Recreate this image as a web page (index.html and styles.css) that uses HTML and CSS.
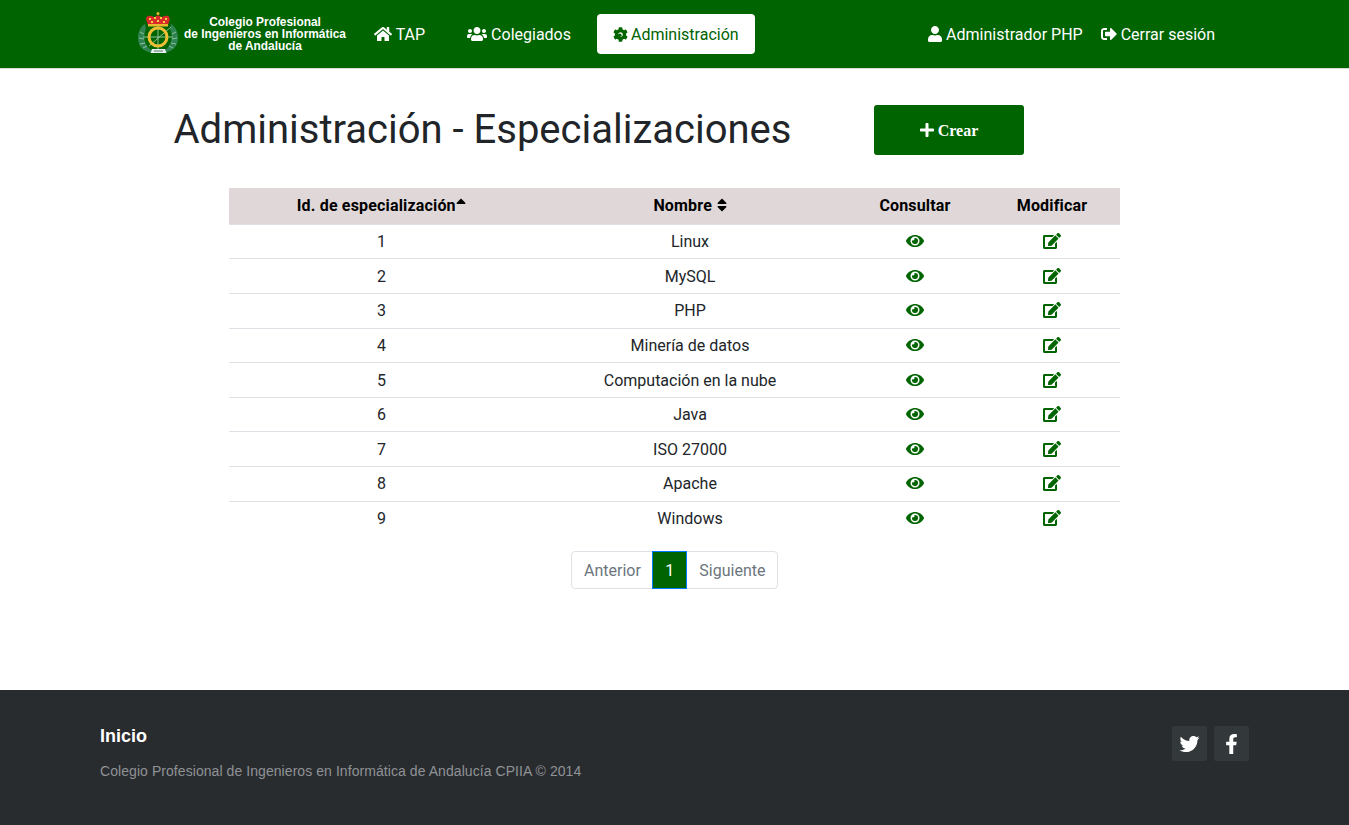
FILE: index.html
```html
<!DOCTYPE html>
<html lang="es">
<head>
<meta charset="utf-8">
<title>Administración - Especializaciones</title>
<link rel="stylesheet" href="styles.css">
</head>
<body>
<svg class="sprite" xmlns="http://www.w3.org/2000/svg">
<symbol id="i-home" viewBox="0 0 576 512"><path d="M280.37 148.26L96 300.11V464a16 16 0 0 0 16 16l112.06-.29a16 16 0 0 0 15.92-16V368a16 16 0 0 1 16-16h64a16 16 0 0 1 16 16v95.64a16 16 0 0 0 16 16.05L464 480a16 16 0 0 0 16-16V300L295.67 148.26a12.19 12.19 0 0 0-15.3 0zM571.6 251.47L488 182.56V44.05a12 12 0 0 0-12-12h-56a12 12 0 0 0-12 12v72.61L318.47 43a48 48 0 0 0-61 0L4.34 251.47a12 12 0 0 0-1.6 16.9l25.5 31A12 12 0 0 0 45.15 301l235.22-193.74a12.19 12.19 0 0 1 15.3 0L530.9 301a12 12 0 0 0 16.9-1.6l25.5-31a12 12 0 0 0-1.7-16.93z"/></symbol>
<symbol id="i-users" viewBox="0 0 640 512"><path d="M96 224c35.3 0 64-28.7 64-64s-28.7-64-64-64-64 28.7-64 64 28.7 64 64 64zm448 0c35.3 0 64-28.7 64-64s-28.7-64-64-64-64 28.7-64 64 28.7 64 64 64zm32 32h-64c-17.6 0-33.5 7.1-45.1 18.6 40.3 22.1 68.9 62 75.1 109.4h66c17.7 0 32-14.3 32-32v-32c0-35.3-28.7-64-64-64zm-256 0c61.9 0 112-50.1 112-112S381.9 32 320 32 208 82.1 208 144s50.1 112 112 112zm76.8 32h-8.3c-20.8 10-43.9 16-68.5 16s-47.6-6-68.5-16h-8.3C179.6 288 128 339.6 128 403.2V432c0 26.5 21.5 48 48 48h288c26.5 0 48-21.5 48-48v-28.8c0-63.6-51.6-115.2-115.2-115.2zm-223.7-13.4C161.5 263.1 145.6 256 128 256H64c-35.3 0-64 28.7-64 64v32c0 17.7 14.3 32 32 32h65.9c6.3-47.4 34.9-87.3 75.2-109.4z"/></symbol>
<symbol id="i-cog" viewBox="0 0 512 512"><path d="M487.4 315.7l-42.6-24.6c4.3-23.2 4.3-47 0-70.2l42.6-24.6c4.9-2.8 7.1-8.6 5.5-14-11.1-35.6-30-67.8-54.7-94.6-3.8-4.1-10-5.1-14.8-2.3L380.8 110c-17.9-15.4-38.5-27.3-60.8-35.1V25.8c0-5.6-3.9-10.5-9.4-11.7-36.7-8.2-74.3-7.8-109.2 0-5.5 1.2-9.4 6.1-9.4 11.7V75c-22.2 7.9-42.8 19.8-60.8 35.1L88.7 85.5c-4.9-2.8-11-1.9-14.8 2.3-24.7 26.7-43.6 58.9-54.7 94.6-1.7 5.4.6 11.2 5.5 14L67.3 221c-4.3 23.2-4.3 47 0 70.2l-42.6 24.6c-4.9 2.8-7.1 8.6-5.5 14 11.1 35.6 30 67.8 54.7 94.6 3.8 4.1 10 5.1 14.8 2.3l42.6-24.6c17.9 15.4 38.5 27.3 60.8 35.1v49.2c0 5.6 3.9 10.5 9.4 11.7 36.7 8.2 74.3 7.8 109.2 0 5.5-1.2 9.4-6.1 9.4-11.7v-49.2c22.2-7.9 42.8-19.8 60.8-35.1l42.6 24.6c4.9 2.8 11 1.9 14.8-2.3 24.7-26.7 43.6-58.9 54.7-94.6 1.5-5.5-.7-11.3-5.6-14.1zM256 336c-44.1 0-80-35.9-80-80s35.9-80 80-80 80 35.9 80 80-35.9 80-80 80z"/><circle cx="232" cy="280" r="62"/></symbol>
<symbol id="i-user" viewBox="0 0 448 512"><path d="M224 256c70.7 0 128-57.3 128-128S294.7 0 224 0 96 57.3 96 128s57.3 128 128 128zm89.6 32h-16.7c-22.2 10.2-46.9 16-72.9 16s-50.6-5.8-72.9-16h-16.7C60.2 288 0 348.2 0 422.4V464c0 26.5 21.5 48 48 48h352c26.5 0 48-21.5 48-48v-41.6c0-74.2-60.2-134.4-134.4-134.4z"/></symbol>
<symbol id="i-out" viewBox="0 0 512 512"><path d="M497 273L329 441c-15 15-41 4.5-41-17v-96H152c-13.3 0-24-10.7-24-24v-96c0-13.3 10.7-24 24-24h136V88c0-21.4 25.9-32 41-17l168 168c9.3 9.4 9.3 24.6 0 34zM192 436v-40c0-6.6-5.4-12-12-12H96c-17.7 0-32-14.3-32-32V160c0-17.7 14.3-32 32-32h84c6.6 0 12-5.4 12-12V76c0-6.6-5.4-12-12-12H96c-53 0-96 43-96 96v192c0 53 43 96 96 96h84c6.6 0 12-5.4 12-12z"/></symbol>
<symbol id="i-plus" viewBox="0 0 448 512"><path d="M416 208H272V64c0-17.67-14.33-32-32-32h-32c-17.67 0-32 14.33-32 32v144H32c-17.67 0-32 14.33-32 32v32c0 17.67 14.33 32 32 32h144v144c0 17.67 14.33 32 32 32h32c17.67 0 32-14.33 32-32V304h144c17.67 0 32-14.33 32-32v-32c0-17.67-14.33-32-32-32z"/></symbol>
<symbol id="i-eye" viewBox="0 0 576 512"><path d="M572.52 241.4C518.29 135.59 410.93 64 288 64S57.68 135.64 3.48 241.41a32.35 32.35 0 0 0 0 29.19C57.71 376.41 165.07 448 288 448s230.32-71.64 284.52-177.41a32.35 32.35 0 0 0 0-29.19zM288 400a144 144 0 1 1 144-144 143.93 143.93 0 0 1-144 144zm0-240a95.31 95.31 0 0 0-25.31 3.79 47.85 47.85 0 0 1-66.9 66.9A95.78 95.78 0 1 0 288 160z"/></symbol>
<symbol id="i-edit" viewBox="0 0 576 512"><path d="M402.6 83.2l90.2 90.2c3.8 3.8 3.8 10 0 13.8L274.4 405.6l-92.8 10.3c-12.4 1.4-22.9-9.1-21.5-21.5l10.3-92.8L388.8 83.2c3.8-3.8 10-3.8 13.8 0zm162-22.9l-48.8-48.8c-15.2-15.2-39.9-15.2-55.2 0l-35.4 35.4c-3.8 3.8-3.8 10 0 13.8l90.2 90.2c3.8 3.8 10 3.8 13.8 0l35.4-35.4c15.2-15.3 15.2-40 0-55.2zM384 346.2V448H64V128h229.8c3.2 0 6.2-1.3 8.5-3.5l40-40c7.6-7.6 2.2-20.5-8.5-20.5H48C21.5 64 0 85.5 0 112v352c0 26.5 21.5 48 48 48h352c26.5 0 48-21.5 48-48V306.2c0-10.7-12.9-16-20.5-8.5l-40 40c-2.2 2.3-3.5 5.3-3.5 8.5z"/></symbol>
<symbol id="i-sort-up" viewBox="0 0 320 512"><path d="M279 224H41c-21.4 0-32.1-25.9-17-41L143 64c9.4-9.4 24.6-9.4 33.9 0l119 119c15.2 15.1 4.5 41-16.9 41z"/></symbol>
<symbol id="i-sort" viewBox="0 0 320 512"><path d="M41 288h238c21.4 0 32.1 25.9 17 41L177 448c-9.4 9.4-24.6 9.4-33.9 0L24 329c-15.1-15.1-4.4-41 17-41zm255-105L177 64c-9.4-9.4-24.6-9.4-33.9 0L24 183c-15.1 15.1-4.4 41 17 41h238c21.4 0 32.1-25.9 17-41z"/></symbol>
<symbol id="i-tw" viewBox="0 0 512 512"><path d="M459.37 151.716c.325 4.548.325 9.097.325 13.645 0 138.72-105.583 298.558-298.558 298.558-59.452 0-114.68-17.219-161.137-47.106 8.447.974 16.568 1.299 25.34 1.299 49.055 0 94.213-16.568 130.274-44.832-46.132-.975-84.792-31.188-98.112-72.772 6.498.974 12.995 1.624 19.818 1.624 9.421 0 18.843-1.3 27.614-3.573-48.081-9.747-84.143-51.98-84.143-102.985v-1.299c13.969 7.797 30.214 12.67 47.431 13.319-28.264-18.843-46.781-51.005-46.781-87.391 0-19.492 5.197-37.36 14.294-52.954 51.655 63.675 129.3 105.258 216.365 109.807-1.624-7.797-2.599-15.918-2.599-24.04 0-57.828 46.782-104.934 104.934-104.934 30.213 0 57.502 12.67 76.67 33.137 23.715-4.548 46.456-13.32 66.599-25.34-7.798 24.366-24.366 44.833-46.132 57.827 21.117-2.273 41.584-8.122 60.426-16.243-14.292 20.791-32.161 39.308-52.628 54.253z"/></symbol>
<symbol id="i-fb" viewBox="0 0 320 512"><path d="M279.14 288l14.22-92.66h-88.91v-60.13c0-25.35 12.42-50.06 52.24-50.06h40.42V6.26S260.43 0 225.36 0c-73.22 0-121.08 44.38-121.08 124.72v70.62H22.89V288h81.39v224h100.17V288z"/></symbol>
</svg>

<header class="navbar">
  <a class="brand" href="#">
    <svg class="crest" viewBox="0 0 42 43" xmlns="http://www.w3.org/2000/svg">
      <path d="M8 12C1 16-1 27 3 34c3 4 7 6 12 7l1-2C9 36 5 27 9 17z" fill="#2f8350"/>
      <path d="M34 12c7 4 9 15 5 22-3 4-7 6-12 7l-1-2c7-3 11-12 7-22z" fill="#2f8350"/>
      <path d="M3 20l4 2M2 26l5 1M3 32l5-1M6 36l4-2M39 20l-4 2M40 26l-5 1M39 32l-5-1M36 36l-4-2" stroke="#8fc0a0" stroke-width="1" fill="none"/>
      <path d="M10 10C8 6 10 3 14 4c2 .5 3 1 4 1 1-2 5-2 6 0 1 0 2-.5 4-1 4-1 6 2 4 6l-1 3H11z" fill="#d82a2a"/>
      <path d="M11 12h20v2.500H11z" fill="#e8b92a"/>
      <circle cx="21" cy="1.500" r="1.500" fill="#e8b92a"/>
      <path d="M12 6h2v2h-2zm5-1h2v2h-2zm6 0h2v2h-2zm5 1h2v2h-2zM14 9h2v2h-2zm6-1h2v2h-2zm6 1h2v2h-2z" fill="#f2cf45"/>
      <path d="M6 25h30M21 14v24M12 34L34 15" stroke="#9cc7aa" stroke-width=".9" fill="none"/>
      <circle cx="21" cy="25" r="9" fill="none" stroke="#eebf35" stroke-width="3"/>
      <path d="M15 37h13l1.500 4h-16z" fill="#e6eef0"/>
      <path d="M17 39h9" stroke="#5a7a6a" stroke-width="1"/>
    </svg>
    <span class="brand-text">Colegio Profesional<br>de Ingenieros en Informática<br>de Andalucía</span>
  </a>
  <nav class="nav-main">
    <a class="nav-link" href="#"><svg class="ico ico-home"><use href="#i-home"/></svg> TAP</a>
    <a class="nav-link" href="#"><svg class="ico ico-users"><use href="#i-users"/></svg> Colegiados</a>
    <a class="nav-link active" href="#"><svg class="ico ico-cog"><use href="#i-cog"/></svg> Administración</a>
  </nav>
  <nav class="nav-user">
    <a class="user-link" href="#"><svg class="ico ico-user"><use href="#i-user"/></svg> Administrador PHP</a>
    <a class="user-link" href="#"><svg class="ico ico-out"><use href="#i-out"/></svg> Cerrar sesión</a>
  </nav>
</header>

<main class="content">
  <div class="title-row">
    <h1 class="title">Administración - Especializaciones</h1>
    <a class="btn-create" href="#"><svg class="ico-plus"><use href="#i-plus"/></svg> <span class="btn-label">Crear</span></a>
  </div>
  <table class="grid">
    <thead>
      <tr>
        <th class="c1">Id. de especialización<svg class="sort"><use href="#i-sort-up"/></svg></th>
        <th class="c2">Nombre <svg class="sort"><use href="#i-sort"/></svg></th>
        <th class="c3">Consultar</th>
        <th class="c4">Modificar</th>
      </tr>
    </thead>
    <tbody>
      <tr><td>1</td><td>Linux</td><td><svg class="act act-eye"><use href="#i-eye"/></svg></td><td><svg class="act act-edit"><use href="#i-edit"/></svg></td></tr>
      <tr><td>2</td><td>MySQL</td><td><svg class="act act-eye"><use href="#i-eye"/></svg></td><td><svg class="act act-edit"><use href="#i-edit"/></svg></td></tr>
      <tr><td>3</td><td>PHP</td><td><svg class="act act-eye"><use href="#i-eye"/></svg></td><td><svg class="act act-edit"><use href="#i-edit"/></svg></td></tr>
      <tr><td>4</td><td>Minería de datos</td><td><svg class="act act-eye"><use href="#i-eye"/></svg></td><td><svg class="act act-edit"><use href="#i-edit"/></svg></td></tr>
      <tr><td>5</td><td>Computación en la nube</td><td><svg class="act act-eye"><use href="#i-eye"/></svg></td><td><svg class="act act-edit"><use href="#i-edit"/></svg></td></tr>
      <tr><td>6</td><td>Java</td><td><svg class="act act-eye"><use href="#i-eye"/></svg></td><td><svg class="act act-edit"><use href="#i-edit"/></svg></td></tr>
      <tr><td>7</td><td>ISO 27000</td><td><svg class="act act-eye"><use href="#i-eye"/></svg></td><td><svg class="act act-edit"><use href="#i-edit"/></svg></td></tr>
      <tr><td>8</td><td>Apache</td><td><svg class="act act-eye"><use href="#i-eye"/></svg></td><td><svg class="act act-edit"><use href="#i-edit"/></svg></td></tr>
      <tr><td>9</td><td>Windows</td><td><svg class="act act-eye"><use href="#i-eye"/></svg></td><td><svg class="act act-edit"><use href="#i-edit"/></svg></td></tr>
    </tbody>
  </table>
  <div class="pagination">
    <a class="page page-first" href="#">Anterior</a>
    <a class="page page-current" href="#">1</a>
    <a class="page page-last" href="#">Siguiente</a>
  </div>
</main>

<footer class="footer">
  <div class="footer-left">
    <a class="footer-link" href="#">Inicio</a>
    <p class="footer-copy">Colegio Profesional de Ingenieros en Informática de Andalucía CPIIA © 2014</p>
  </div>
  <div class="footer-social">
    <a class="social" href="#"><svg class="ico-tw"><use href="#i-tw"/></svg></a>
    <a class="social" href="#"><svg class="ico-fb"><use href="#i-fb"/></svg></a>
  </div>
</footer>
</body>
</html>
```

FILE: styles.css
```css
* { box-sizing: border-box; }
html, body { margin: 0; padding: 0; }
body {
  min-height: 100vh;
  display: flex;
  flex-direction: column;
  font-family: Roboto, "Liberation Sans", sans-serif;
  font-size: 16px;
  line-height: 24px;
  color: #212529;
  background: #fff;
}
a { text-decoration: none; color: inherit; }
.sprite { display: none; }

.navbar {
  height: 69px;
  flex: none;
  display: flex;
  align-items: center;
  padding: 0 134px 1px 137px;
  background: #006400;
  border-bottom: 1px solid #d4dcd4;
  color: #fff;
}
.brand { display: flex; align-items: center; width: 221px; flex: none; }
.crest { width: 42px; height: 43px; flex: none; }
.brand-text {
  margin-left: 4px;
  padding-top: 1px;
  width: 164px;
  font-family: "Liberation Sans", Arial, sans-serif;
  font-weight: 700;
  font-size: 11.9px;
  line-height: 12px;
  text-align: center;
  white-space: nowrap;
}
.nav-main { display: flex; gap: 10px; }
.nav-link {
  height: 40px;
  padding: 9px 16px 7px;
  border-radius: 4px;
  white-space: nowrap;
}
.nav-link.active { background: #fff; color: #006400; }
.nav-user { margin-left: auto; display: flex; gap: 18px; padding-top: 2px; }
.user-link { white-space: nowrap; }
.ico { height: 16px; fill: currentColor; vertical-align: -2px; }
.ico-home { width: 18px; }
.ico-users { width: 20px; }
.ico-cog { width: 15px; height: 15px; margin-right: -1px; vertical-align: -2px; }
.ico-user { width: 14px; }
.ico-out { width: 16px; }

.content { flex: 1; display: flex; flex-direction: column; align-items: stretch; }
.title-row { display: flex; align-items: center; padding: 3px 0 0 173.5px; height: 119px; }
.title {
  margin: 0;
  width: 700.5px;
  font-size: 40px;
  line-height: 48px;
  font-weight: 400;
  white-space: nowrap;
}
.btn-create {
  width: 150px;
  height: 50px;
  display: flex;
  align-items: center;
  justify-content: center;
  gap: 4px;
  background: #006400;
  border-radius: 3px;
  color: #fff;
  font-family: "Liberation Serif", "Times New Roman", serif;
  font-weight: 700;
  font-size: 16px;
}
.btn-label { padding-top: 2px; }
.ico-plus { width: 14px; height: 16px; fill: #fff; }

.grid {
  margin: .4px 0 0 229px;
  width: 891px;
  border-collapse: collapse;
  table-layout: fixed;
  text-align: center;
}
.grid th {
  height: 36px;
  padding: 0;
  background: #e0d8d8;
  color: #000;
  font-weight: 700;
  letter-spacing: .17px;
  border-bottom: 1px solid #dee2e6;
}
.c1 { width: 305px; }
.c2 { width: 312px; }
.c3 { width: 138px; }
.c4 { width: 136px; }
.grid td {
  height: 34.6px;
  padding: 1px 0 0;
  border-top: 1px solid #dee2e6;
}
.grid tbody tr:first-child td { border-top: 0; }
.sort { margin-left: .5px; width: 10px; height: 16px; fill: #000; vertical-align: -2px; }
.act { fill: #006400; vertical-align: -2px; }
.act-eye { width: 18px; height: 16px; }
.act-edit { width: 18px; height: 16px; }

.pagination { margin: 15.7px 0 0 571px; display: flex; height: 38px; }
.page {
  padding: 7px 12px 5px;
  border: 1px solid #dee2e6;
  color: #6c757d;
  background: #fff;
  margin-left: -1px;
}
.page-first { margin-left: 0; padding-right: 11.5px; border-radius: 4px 0 0 4px; }
.page-last { border-radius: 0 4px 4px 0; }
.page-current { position: relative; z-index: 1; background: #006400; color: #fff; border-color: #007bff; }

.footer {
  height: 135px;
  flex: none;
  display: flex;
  justify-content: space-between;
  padding: 36px 100px 0;
  background: #292c2f;
  font-family: "Liberation Sans", Arial, sans-serif;
}
.footer-link { display: block; color: #fff; font-weight: 700; font-size: 18px; line-height: 20px; }
.footer-copy { margin: 15px 0 0; color: #8f9296; font-size: 14px; line-height: 20px; letter-spacing: .065px; }
.footer-social { display: flex; gap: 7px; }
.social {
  width: 35px;
  height: 35px;
  display: flex;
  align-items: center;
  justify-content: center;
  background: #33383b;
  border-radius: 2px;
}
.ico-tw { width: 21px; height: 20px; fill: #fff; }
.ico-fb { width: 13px; height: 20px; fill: #fff; }
```
